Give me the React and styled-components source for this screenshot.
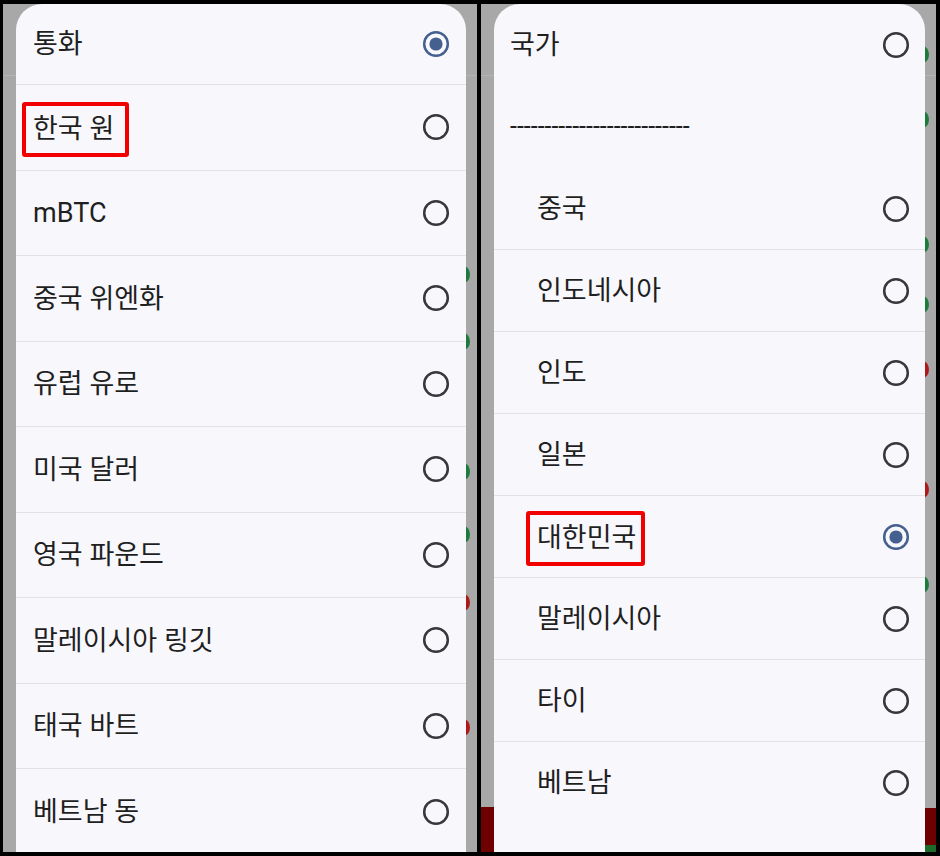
import styled, { createGlobalStyle } from "styled-components";

const GlobalStyle = createGlobalStyle`
  html, body {
    margin: 0;
    padding: 0;
    background: #000;
  }
  * {
    box-sizing: border-box;
  }
`;

const Frame = styled.div`
  display: flex;
  gap: 4px;
  width: 940px;
  height: 856px;
  padding: 4px 4px 4px 3px;
  background: #000;
  font-family: Roboto, "Noto Sans CJK KR", sans-serif;
  color: #1f1f1f;
`;

const Screen = styled.div`
  display: flex;
  width: ${(p) => p.width}px;
  height: 100%;
  background: linear-gradient(
    to bottom,
    #a8a8a8 0,
    #a8a8a8 71px,
    #b4b4b4 71px,
    #b4b4b4 72px,
    #a8a8a8 72px
  );
  overflow: hidden;
`;

const Strip = styled.div`
  position: relative;
  flex: 0 0 ${(p) => p.width}px;
  height: 100%;
`;

const Dot = styled.span`
  position: absolute;
  left: -9px;
  width: 13px;
  height: 17px;
  border-radius: 50%;
  background: ${(p) => (p.red ? "#b01818" : "#1e7a3c")};
`;

const Block = styled.span`
  position: absolute;
  left: 0;
  right: 0;
  background: ${(p) => p.color};
`;

const Sheet = styled.div`
  position: relative;
  z-index: 1;
  flex: 1;
  display: flex;
  flex-direction: column;
  background: #f8f8fc;
  border-radius: 26px 26px 0 0;
  overflow: hidden;
`;

const Row = styled.div`
  display: flex;
  align-items: center;
  justify-content: space-between;
  flex: 0 0 auto;
  height: ${(p) => p.h}px;
  padding: 0 ${(p) => p.pr}px 0 ${(p) => p.pl}px;
  border-bottom: ${(p) => (p.line ? "1px solid #e2e2e6" : "none")};
  font-size: 27px;
  line-height: 1.3;
`;

const Text = styled.span`
  position: relative;
  top: 1px;
`;

const Dashes = styled.span`
  font-size: 25px;
  color: #1f1f1f;
`;

const Marked = styled.span`
  display: inline-block;
  position: relative;
  top: 2px;
  border: 4px solid #f20000;
  border-radius: 3px;
  padding: 6px ${(p) => p.right}px 6px 7px;
  margin: -10px -${(p) => p.right + 4}px -10px -11px;
`;

const Radio = ({ on }) => (
  <svg width="28" height="28" viewBox="0 0 28 28">
    <circle
      cx="14"
      cy="14"
      r="11.8"
      fill="none"
      stroke={on ? "#45608f" : "#38383b"}
      strokeWidth="2.5"
    />
    {on && <circle cx="14" cy="14" r="6.6" fill="#45608f" />}
  </svg>
);

const currencies = [
  { name: "통화", on: true },
  { name: "한국 원", mark: 11 },
  { name: "mBTC" },
  { name: "중국 위엔화" },
  { name: "유럽 유로" },
  { name: "미국 달러" },
  { name: "영국 파운드" },
  { name: "말레이시아 링깃" },
  { name: "태국 바트" },
  { name: "베트남 동" },
];

const countries = [
  { name: "중국" },
  { name: "인도네시아" },
  { name: "인도" },
  { name: "일본" },
  { name: "대한민국", on: true, mark: 5 },
  { name: "말레이시아" },
  { name: "타이" },
  { name: "베트남" },
];

const leftDots = [
  { y: 262 },
  { y: 329 },
  { y: 459 },
  { y: 522 },
  { y: 590, red: true },
  { y: 715, red: true },
];

const rightDots = [
  { y: 42 },
  { y: 107 },
  { y: 232 },
  { y: 292 },
  { y: 357, red: true },
  { y: 477, red: true },
  { y: 572 },
];

const Label = ({ item }) =>
  item.mark ? (
    <Marked right={item.mark}>{item.name}</Marked>
  ) : (
    <Text>{item.name}</Text>
  );

export default function App() {
  return (
    <>
      <GlobalStyle />
      <Frame>
        <Screen width={474}>
          <Strip width={13} />
          <Sheet>
            {currencies.map((c, i) => (
              <Row
                key={c.name}
                h={i === 0 ? 81 : 85.5}
                pl={17}
                pr={16}
                line={i < currencies.length - 1}
              >
                <Label item={c} />
                <Radio on={c.on} />
              </Row>
            ))}
          </Sheet>
          <Strip width={11}>
            {leftDots.map((d) => (
              <Dot key={d.y} red={d.red} style={{ top: d.y }} />
            ))}
          </Strip>
        </Screen>

        <Screen width={455}>
          <Strip width={13}>
            <Block color="#6e0000" style={{ top: 803, bottom: 0 }} />
          </Strip>
          <Sheet>
            <Row h={82} pl={16} pr={15}>
              <Text>국가</Text>
              <Radio />
            </Row>
            <Row h={82} pl={16} pr={15}>
              <Dashes>--------------------------</Dashes>
            </Row>
            {countries.map((c, i) => (
              <Row
                key={c.name}
                h={82}
                pl={43}
                pr={15}
                line={i < countries.length - 1}
              >
                <Label item={c} />
                <Radio on={c.on} />
              </Row>
            ))}
          </Sheet>
          <Strip width={11}>
            {rightDots.map((d) => (
              <Dot key={d.y} red={d.red} style={{ top: d.y }} />
            ))}
            <Block color="#6e0000" style={{ top: 804, height: 37 }} />
            <Block color="#1e6a2c" style={{ top: 841, bottom: 0 }} />
          </Strip>
        </Screen>
      </Frame>
    </>
  );
}
